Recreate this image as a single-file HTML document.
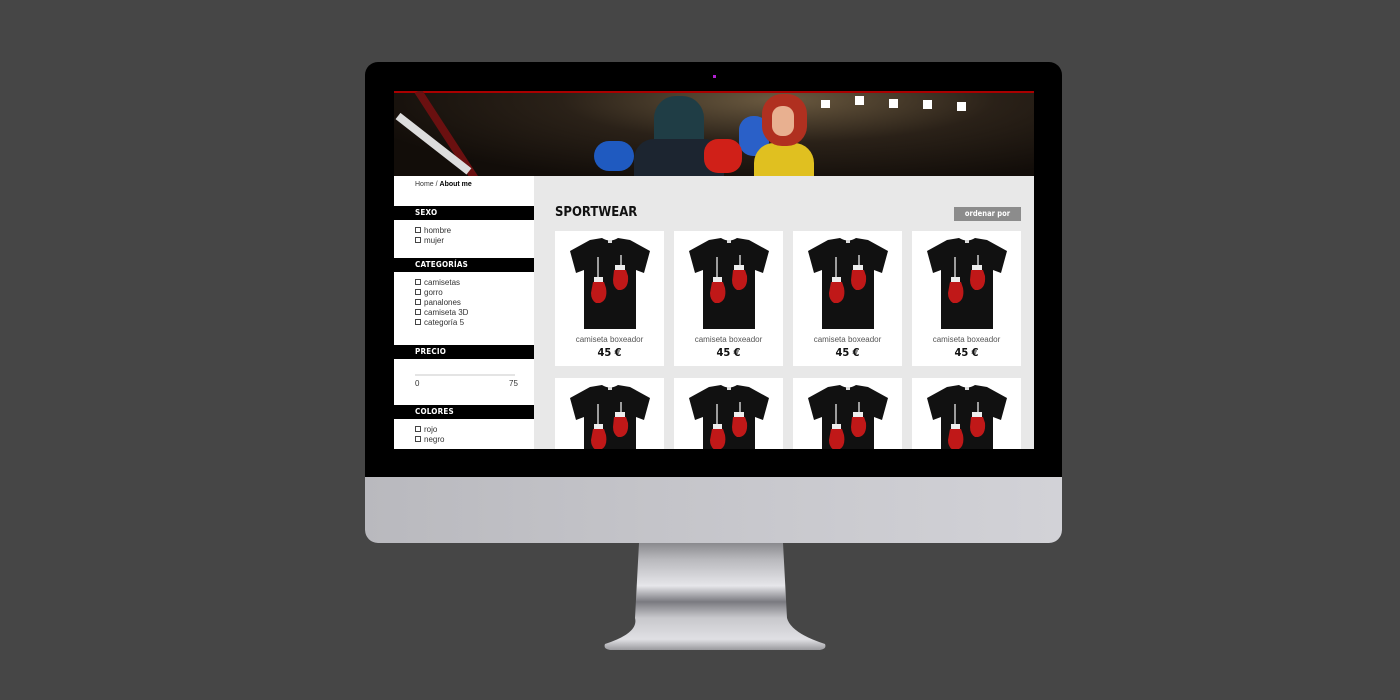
<!DOCTYPE html>
<html><head><meta charset="utf-8"><style>
*{margin:0;padding:0;box-sizing:border-box}
body{width:1400px;height:700px;background:#464646;position:relative;overflow:hidden;font-family:"Liberation Sans","DejaVu Sans",sans-serif}
.abs{position:absolute}
#mon{left:365px;top:62px;width:697px;height:481px;border-radius:13px;background:#000;overflow:hidden}
#chin{left:0;top:415px;width:697px;height:66px;background:linear-gradient(90deg,#b9b9be,#c9c9ce 60%,#d2d2d7)}
#screen{left:394px;top:91px;width:640px;height:358px;background:#e8e8e8;overflow:hidden}
#hdr{left:0;top:0;width:640px;height:85px;background:radial-gradient(ellipse at 60% 10%,#6b5a40 0,#2a2118 40%,#120d09 80%);overflow:hidden}
#side{left:0;top:85px;width:140px;height:273px;background:#fff}
.bar{position:absolute;left:0;width:140px;height:14px;background:#000;color:#fff;font:bold 8px "DejaVu Sans Condensed","DejaVu Sans",sans-serif;padding-left:21px;line-height:14px;letter-spacing:.2px}
.it{position:absolute;left:21px;font-size:8px;color:#333;line-height:10px}
.it span{display:inline-block;width:6px;height:6px;border:1px solid #444;margin-right:3px;vertical-align:-0px}
.card{position:absolute;width:109px;height:135px;background:#fff}
.card .n{position:absolute;top:104px;width:100%;text-align:center;font-size:8px;color:#555}
.card .p{position:absolute;top:115px;width:100%;text-align:center;font:bold 11px "DejaVu Sans Condensed",sans-serif;color:#111}
.card svg{position:absolute;left:13px;top:6px}
</style></head><body>
<div id="mon" class="abs">
 <div class="abs" style="left:348px;top:13px;width:3px;height:3px;background:#b020d0"></div>
 <div id="chin" class="abs"></div>
</div>
<div id="screen" class="abs">
 <div id="hdr" class="abs">
  <div class="abs" style="left:0;top:0;width:640px;height:2px;background:#a00"></div>
  <div class="abs" style="left:20px;top:0;width:8px;height:110px;background:#6a1010;transform:rotate(-33deg);transform-origin:top"></div>
  <div class="abs" style="left:0;top:25px;width:8px;height:90px;background:#ddd;transform:rotate(-52deg);transform-origin:top"></div>
  <div class="abs" style="left:427px;top:9px;width:9px;height:8px;background:#fff"></div>
  <div class="abs" style="left:461px;top:5px;width:9px;height:9px;background:#fff"></div>
  <div class="abs" style="left:495px;top:8px;width:9px;height:9px;background:#fff"></div>
  <div class="abs" style="left:529px;top:9px;width:9px;height:9px;background:#fff"></div>
  <div class="abs" style="left:563px;top:11px;width:9px;height:9px;background:#fff"></div>
  <div class="abs" style="left:260px;top:5px;width:50px;height:80px;border-radius:22px 22px 5px 5px;background:#1f3d45"></div>
  <div class="abs" style="left:240px;top:48px;width:90px;height:40px;border-radius:20px 20px 0 0;background:#1c2530"></div>
  <div class="abs" style="left:200px;top:50px;width:40px;height:30px;border-radius:15px;background:#1f5ac0"></div>
  <div class="abs" style="left:345px;top:25px;width:30px;height:40px;border-radius:14px;background:#2a60c8"></div>
  <div class="abs" style="left:360px;top:52px;width:60px;height:40px;border-radius:20px 20px 0 0;background:#e0c020"></div>
  <div class="abs" style="left:368px;top:3px;width:45px;height:52px;border-radius:20px;background:#b03020"></div>
  <div class="abs" style="left:378px;top:15px;width:22px;height:30px;border-radius:10px;background:#e8b090"></div>
  <div class="abs" style="left:310px;top:48px;width:38px;height:34px;border-radius:14px;background:#d02018"></div>
 </div>
 <div id="side" class="abs">
  <div class="abs" style="left:21px;top:5px;font-size:7px;color:#333">Home / <b style="color:#000">About me</b></div>
  <div class="bar" style="top:30px">SEXO</div>
  <div class="it" style="top:50px"><span></span>hombre</div>
  <div class="it" style="top:60px"><span></span>mujer</div>
  <div class="bar" style="top:82px">CATEGORÍAS</div>
  <div class="it" style="top:102px"><span></span>camisetas</div>
  <div class="it" style="top:112px"><span></span>gorro</div>
  <div class="it" style="top:122px"><span></span>panalones</div>
  <div class="it" style="top:132px"><span></span>camiseta 3D</div>
  <div class="it" style="top:142px"><span></span>categoría 5</div>
  <div class="bar" style="top:169px">PRECIO</div>
  <div class="abs" style="left:21px;top:198px;width:100px;height:2px;background:#e4e4e4"></div>
  <div class="it" style="top:203px">0</div>
  <div class="it" style="top:203px;left:115px">75</div>
  <div class="bar" style="top:229px">COLORES</div>
  <div class="it" style="top:249px"><span></span>rojo</div>
  <div class="it" style="top:259px"><span></span>negro</div>
 </div>
 <div class="abs" style="left:161px;top:114px;font:bold 13px 'DejaVu Sans Condensed',sans-serif;color:#111">SPORTWEAR</div>
 <div class="abs" style="left:560px;top:116px;width:67px;height:14px;background:#8c8c8c;color:#fff;font:bold 7.5px 'DejaVu Sans Condensed',sans-serif;text-align:center;line-height:14px">ordenar por</div>
</div>
<svg width="0" height="0" style="position:absolute"><defs>
<g id="ts">
 <path d="M22 3 L34 1 Q42 6 50 1 L62 3 L82 14 L76 36 L68 33 L68 92 L16 92 L16 33 L8 36 L2 14 Z" fill="#111"/>
 <rect x="40" y="3" width="4" height="3" fill="#ddd"/>
 <line x1="30" y1="20" x2="30" y2="40" stroke="#ccc" stroke-width="1.5"/>
 <line x1="53" y1="18" x2="53" y2="30" stroke="#ccc" stroke-width="1.5"/>
 <rect x="26" y="40" width="9" height="5" fill="#eee"/>
 <path d="M25 45 h11 l2 6 q2 12 -6 15 h-4 q-5 -3 -5 -10 z" fill="#c01818"/>
 <rect x="47" y="28" width="10" height="5" fill="#eee"/>
 <path d="M46 33 h12 l2 6 q1 12 -7 14 h-3 q-5 -3 -5 -10 z" fill="#c01818"/>
</g></defs></svg>
<div id="cards"></div>
<script></script>
<div class="card" style="left:555px;top:231px"><svg width="84" height="95"><use href="#ts"/></svg><div class="n">camiseta boxeador</div><div class="p">45 €</div></div>
<div class="card" style="left:674px;top:231px"><svg width="84" height="95"><use href="#ts"/></svg><div class="n">camiseta boxeador</div><div class="p">45 €</div></div>
<div class="card" style="left:793px;top:231px"><svg width="84" height="95"><use href="#ts"/></svg><div class="n">camiseta boxeador</div><div class="p">45 €</div></div>
<div class="card" style="left:912px;top:231px"><svg width="84" height="95"><use href="#ts"/></svg><div class="n">camiseta boxeador</div><div class="p">45 €</div></div>
<div class="card" style="left:555px;top:378px;height:71px"><svg width="84" height="65"><use href="#ts"/></svg></div>
<div class="card" style="left:674px;top:378px;height:71px"><svg width="84" height="65"><use href="#ts"/></svg></div>
<div class="card" style="left:793px;top:378px;height:71px"><svg width="84" height="65"><use href="#ts"/></svg></div>
<div class="card" style="left:912px;top:378px;height:71px"><svg width="84" height="65"><use href="#ts"/></svg></div>
<svg class="abs" style="left:595px;top:543px" width="240" height="110">
 <defs><linearGradient id="st" x1="0" y1="0" x2="0" y2="1">
  <stop offset="0" stop-color="#8a8a8e"/><stop offset=".15" stop-color="#b8b8bc"/><stop offset=".4" stop-color="#e6e6ea"/><stop offset=".55" stop-color="#7a7a80"/><stop offset=".7" stop-color="#c8c8cc"/><stop offset=".9" stop-color="#e0e0e4"/><stop offset="1" stop-color="#9a9a9e"/></linearGradient></defs>
 <path d="M44 0 L188 0 L192 75 Q196 90 230 101 Q232 106 225 107 L15 107 Q8 106 10 101 Q44 90 40 75 Z" fill="url(#st)"/>
</svg>
</body></html>
